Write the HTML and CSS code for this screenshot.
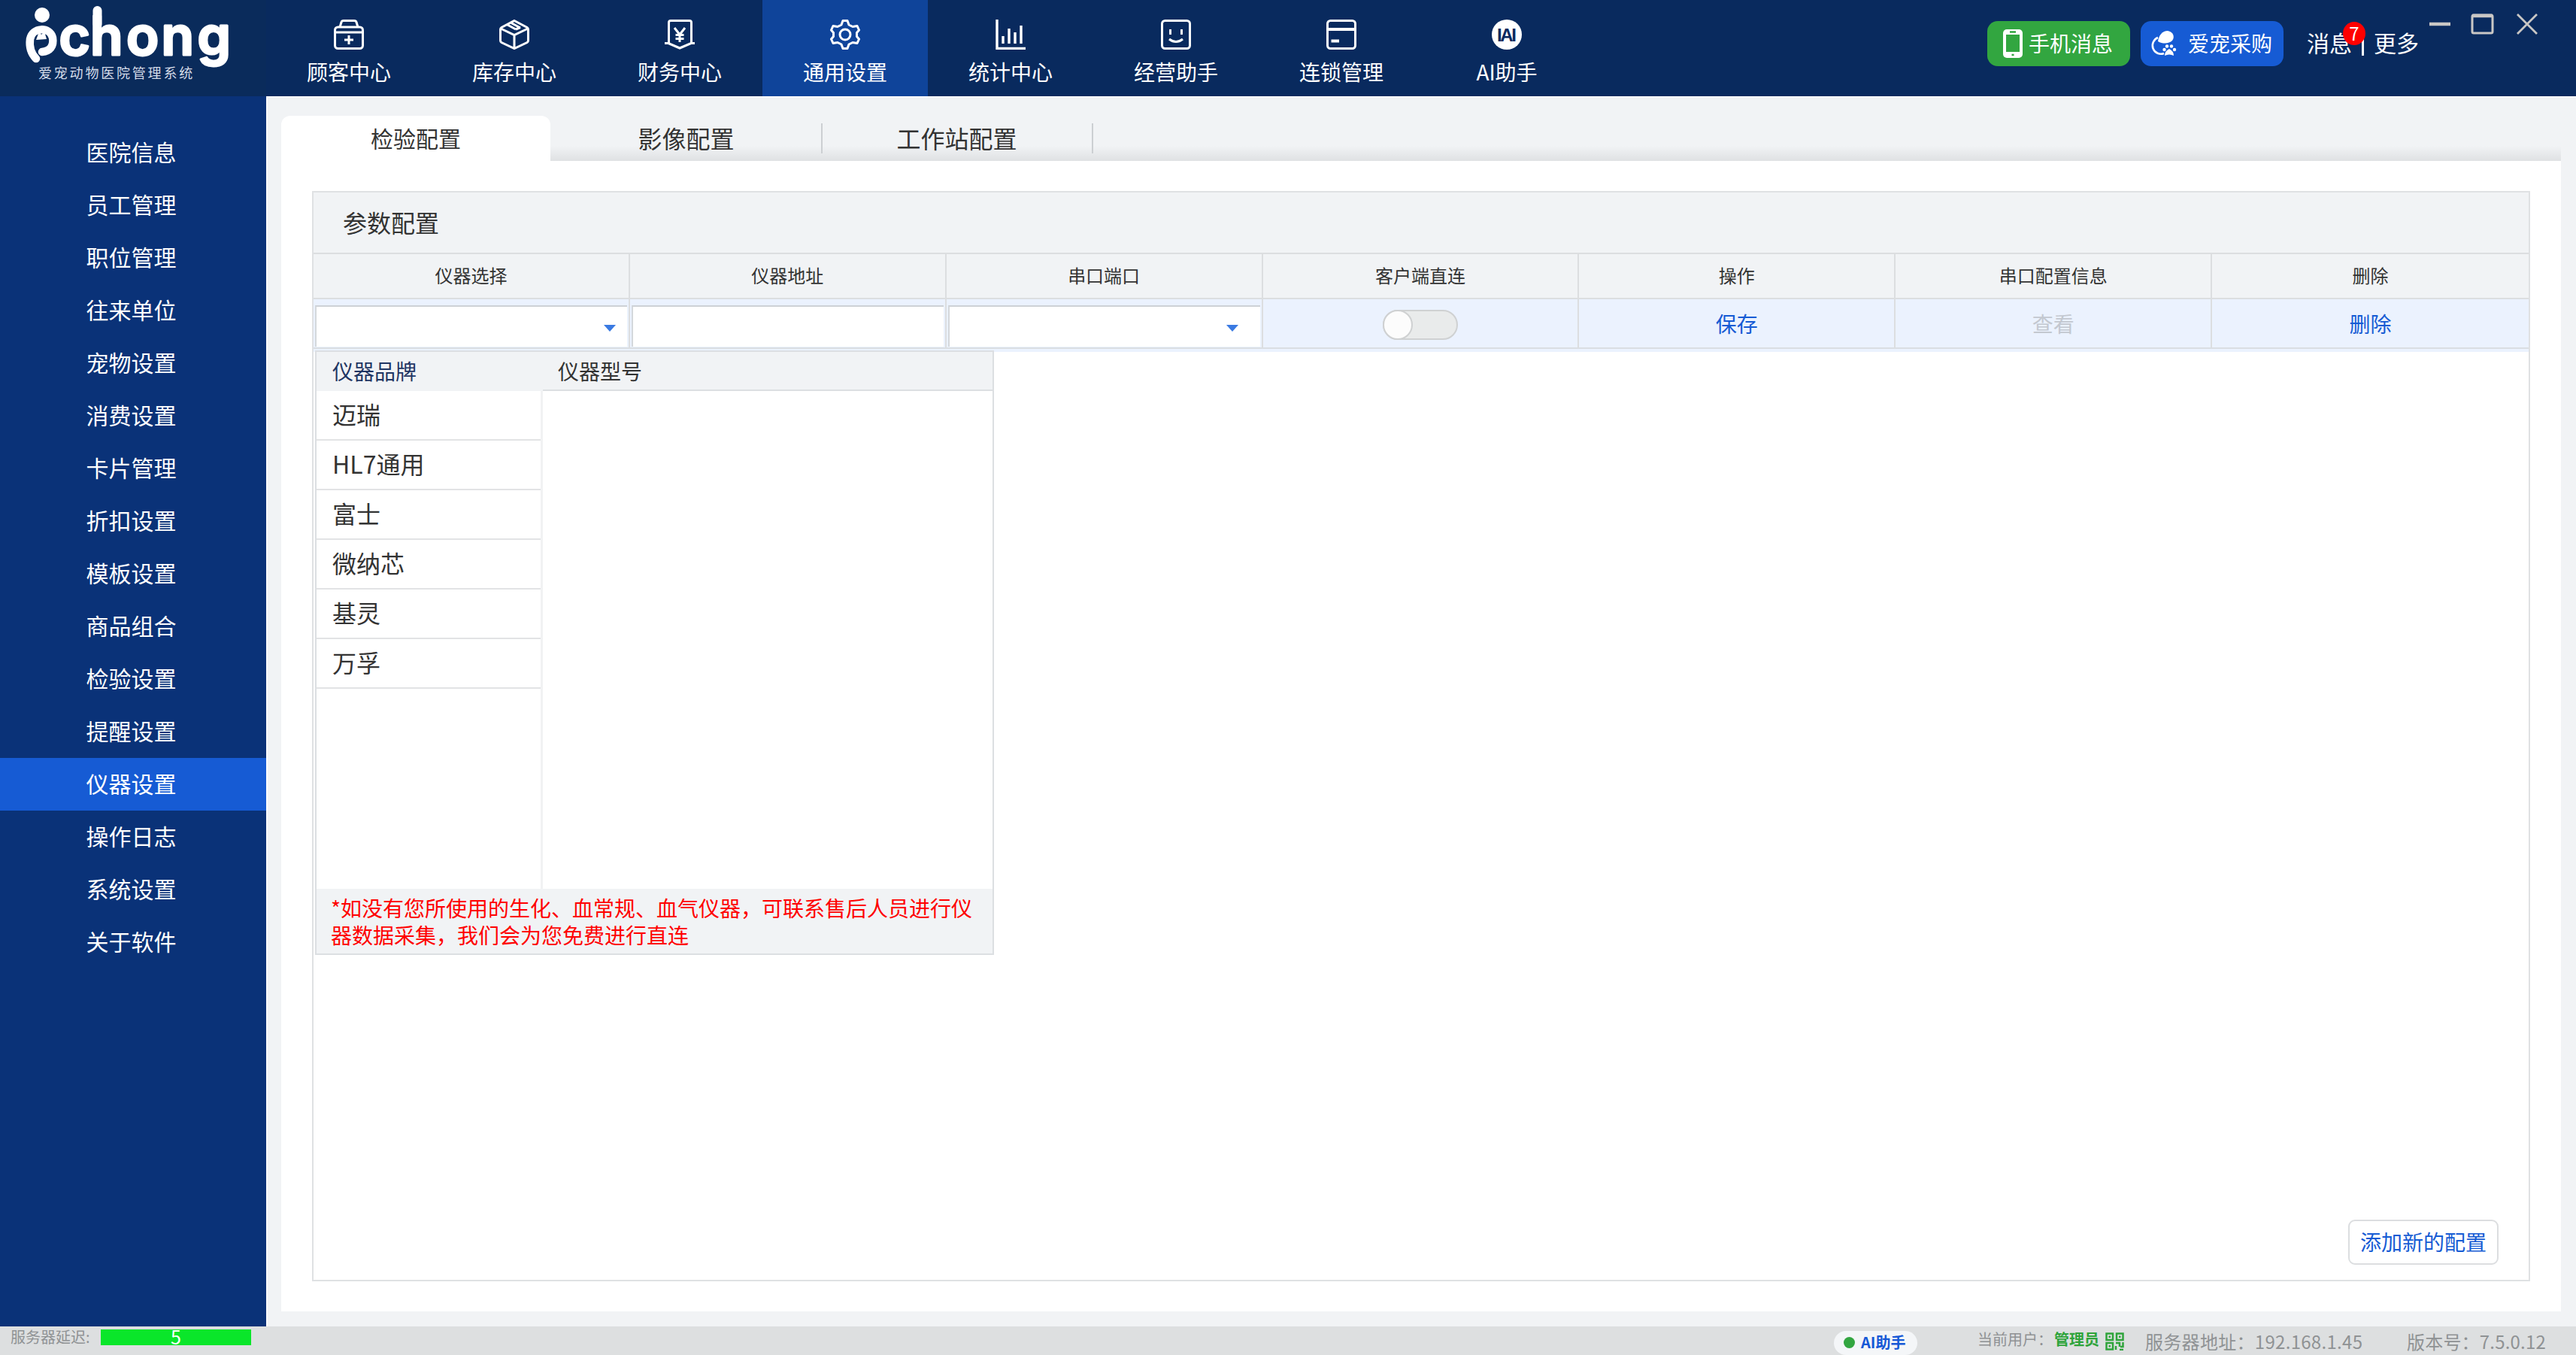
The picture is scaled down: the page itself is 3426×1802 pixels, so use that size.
FILE: index.html
```html
<!DOCTYPE html>
<html lang="zh-CN">
<head>
<meta charset="utf-8">
<title>爱宠动物医院管理系统</title>
<link rel="stylesheet" href="styles.css">
</head>
<body>
<div class="app">
  <header class="topbar">
    <div class="brand">
      <svg class="brand-logo" viewBox="0 0 354 128" width="354" height="128">
        <circle cx="56" cy="20" r="10" fill="#fff"/>
        <path d="M48 78C40 70 39 60 40 52C43 36 66 35 70 50C72 62 66 68 56 69" fill="none" stroke="#fff" stroke-width="10.500" stroke-linecap="round"/>
        <path d="M48 53L52 42L55 46L59 42L62 52Z" fill="#fff"/>
        <path d="M129.500 14V32" stroke="#fff" stroke-width="12" stroke-linecap="round"/>
        <text class="brand-word" x="78.500 120 168 214.500 262.500" y="73">chong</text>
        <text class="brand-sub" x="51" y="104">爱宠动物医院管理系统</text>
      </svg>
    </div>
    <nav class="nav">
      <a class="nav-item">
        <svg class="nav-icon" viewBox="0 0 40 40"><rect x="1.500" y="10" width="37" height="28.500" rx="4"/><path d="M1.500 17H38.500M8 10L10 3.500Q10.500 1.500 13 1.500H27Q29.500 1.500 30 3.500L32 10M20 21V33M14 27H26"/></svg>
        <span>顾客中心</span>
      </a>
      <a class="nav-item">
        <svg class="nav-icon" viewBox="0 0 40 40"><path d="M20 1.500L37 10.500Q38.500 11.500 38.500 13V28Q38.500 29.500 37 30.500L20 38.500L3 30.500Q1.500 29.500 1.500 28V13Q1.500 11.500 3 10.500ZM2 12L20 20.500L38 12M20 20.500V38M10 6.500L22 13M15 4L28 11M22 13L28 10.500"/></svg>
        <span>库存中心</span>
      </a>
      <a class="nav-item">
        <svg class="nav-icon" viewBox="0 0 40 40"><path d="M5.500 33V4Q5.500 1.500 8 1.500H33Q35.500 1.500 35.500 4V33M0 31.500H5L20 38L35 31.500H40M13 11L20 20L27 11M20 20V30M14.500 20.500H25.500M14.500 25.500H25.500"/></svg>
        <span>财务中心</span>
      </a>
      <a class="nav-item nav-item--active">
        <svg class="nav-icon" viewBox="0 0 40 40"><path d="M17 1.500H23L25 7L30 9.500L36 8.500L38.500 14L35.500 17.500V22.500L38.500 26L36 31.500L30 30.500L25 33L23 38.500H17L15 33L10 30.500L4 31.500L1.500 26L4.500 22.500V17.500L1.500 14L4 8.500L10 9.500L15 7Z" stroke-linejoin="round"/><circle cx="20" cy="20" r="7"/></svg>
        <span>通用设置</span>
      </a>
      <a class="nav-item">
        <svg class="nav-icon" viewBox="0 0 40 40"><path d="M2 0V38.500H40M10 32V22M18 32V12M26 32V17M34 32V8" stroke-width="3.400"/></svg>
        <span>统计中心</span>
      </a>
      <a class="nav-item">
        <svg class="nav-icon" viewBox="0 0 40 40"><rect x="1.500" y="1.500" width="37" height="37" rx="4"/><path d="M12.500 13V20M27.500 13V20M11 26Q20 33 29 26"/></svg>
        <span>经营助手</span>
      </a>
      <a class="nav-item">
        <svg class="nav-icon" viewBox="0 0 40 40"><rect x="1.500" y="1.500" width="37" height="37" rx="4"/><path d="M2 13H38M6.500 28.500H17" stroke-width="4"/></svg>
        <span>连锁管理</span>
      </a>
      <a class="nav-item">
        <svg class="nav-icon" viewBox="0 0 40 40"><circle class="nav-icon-disc" cx="20" cy="20" r="20"/><text class="nav-icon-text" x="20" y="29" text-anchor="middle" textLength="26">IAI</text></svg>
        <span>AI助手</span>
      </a>
    </nav>
    <div class="tools">
      <button class="tool-btn tool-btn--green">
        <svg width="26" height="38" viewBox="0 0 26 38"><rect width="26" height="38" rx="5" fill="#fff"/><path d="M4 7H22V30H4Z" fill="#32a640"/><path d="M9 3.500H17M11.500 34H14.500" stroke="#32a640" stroke-width="2.500"/></svg>
        <span>手机消息</span>
      </button>
      <button class="tool-btn tool-btn--blue">
        <svg width="36" height="34" viewBox="0 0 36 34"><path d="M10 9A11 11 0 1 0 18 30" fill="none" stroke="#fff" stroke-width="2.500"/><path d="M10 14C11 6 16 0 23 0C30 1 33 8 29 13C25 17 17 18 10 14Z" fill="#fff"/><path d="M19 33Q19 27 25 24Q31 27 31 33Q25 30 19 33Z" fill="#fff"/><circle cx="18.500" cy="25" r="2.200" fill="#fff"/><circle cx="22" cy="20.500" r="2.200" fill="#fff"/><circle cx="28" cy="20.500" r="2.200" fill="#fff"/><circle cx="32" cy="25" r="2.200" fill="#fff"/></svg>
        <span>爱宠采购</span>
      </button>
      <div class="links">
        <span class="msg">消息<b class="badge">7</b></span>
        <i class="links-sep"></i>
        <span>更多</span>
      </div>
      <svg class="win-controls" width="144" height="30" viewBox="0 0 144 30"><path d="M0 15H28" stroke-width="4.500"/><rect x="57" y="3" width="27" height="24" rx="2" stroke-width="3"/><path d="M57 4H84" stroke-width="4.500"/><path d="M117 2L143 28M143 2L117 28" stroke-width="2.800"/></svg>
    </div>
  </header>

  <div class="body">
    <aside class="sidebar">
      <a class="side-item">医院信息</a>
      <a class="side-item">员工管理</a>
      <a class="side-item">职位管理</a>
      <a class="side-item">往来单位</a>
      <a class="side-item">宠物设置</a>
      <a class="side-item">消费设置</a>
      <a class="side-item">卡片管理</a>
      <a class="side-item">折扣设置</a>
      <a class="side-item">模板设置</a>
      <a class="side-item">商品组合</a>
      <a class="side-item">检验设置</a>
      <a class="side-item">提醒设置</a>
      <a class="side-item side-item--active">仪器设置</a>
      <a class="side-item">操作日志</a>
      <a class="side-item">系统设置</a>
      <a class="side-item">关于软件</a>
    </aside>

    <main class="main">
      <div class="tabs">
        <div class="tab tab--active">检验配置</div>
        <div class="tab">影像配置</div>
        <div class="tab">工作站配置</div>
      </div>
      <section class="page">
        <div class="panel">
          <h2 class="panel-title">参数配置</h2>
          <div class="row row--head">
            <div class="cell">仪器选择</div>
            <div class="cell">仪器地址</div>
            <div class="cell">串口端口</div>
            <div class="cell">客户端直连</div>
            <div class="cell">操作</div>
            <div class="cell">串口配置信息</div>
            <div class="cell">删除</div>
          </div>
          <div class="row row--data">
            <div class="cell cell--field">
              <div class="field field--select"></div>
              <div class="dropdown">
                <div class="dropdown-cols">
                  <div class="brands">
                    <div class="col-title col-title--brand">仪器品牌</div>
                    <div class="brand-item">迈瑞</div>
                    <div class="brand-item">HL7通用</div>
                    <div class="brand-item">富士</div>
                    <div class="brand-item">微纳芯</div>
                    <div class="brand-item">基灵</div>
                    <div class="brand-item">万孚</div>
                  </div>
                  <div class="models">
                    <div class="col-title col-title--model">仪器型号</div>
                  </div>
                </div>
                <p class="dropdown-note">*如没有您所使用的生化、血常规、血气仪器，可联系售后人员进行仪<br>器数据采集，我们会为您免费进行直连</p>
              </div>
            </div>
            <div class="cell cell--field"><div class="field"></div></div>
            <div class="cell cell--field"><div class="field field--select field--port"></div></div>
            <div class="cell"><div class="toggle"><i class="toggle-knob"></i></div></div>
            <div class="cell cell--link">保存</div>
            <div class="cell cell--disabled">查看</div>
            <div class="cell cell--link">删除</div>
          </div>
          <div class="row-tail"></div>
          <div class="panel-foot"><button class="add-btn">添加新的配置</button></div>
        </div>
      </section>
    </main>
  </div>

  <footer class="status">
    <span class="latency-label">服务器延迟:</span>
    <span class="latency-bar">5</span>
    <span class="ai-pill"><i class="ai-dot"></i>AI助手</span>
    <span class="user-label">当前用户：</span>
    <b class="user-name">管理员</b>
    <svg class="qr" width="25" height="24" viewBox="0 0 25 24"><path d="M1.500 1.500H10V10H1.500ZM15 1.500H23.500V10H15ZM1.500 14H10V22.500H1.500ZM14 14H19V19M23.500 13V19H20M14 18V23M19 23H24M4.500 5.700H7M18 5.700H20.500M4.500 18.300H7" fill="none" stroke="#2fa43b" stroke-width="2.500"/></svg>
    <span class="server">服务器地址：192.168.1.45</span>
    <span class="version">版本号：7.5.0.12</span>
  </footer>
</div>
</body>
</html>
```
FILE: styles.css
```css
* { box-sizing: border-box; }

body {
  margin: 0;
  font-family: "Noto Sans CJK SC", sans-serif;
  color: #333;
  background: #f1f3f5;
}

button { font-family: inherit; }

.app {
  display: flex;
  flex-direction: column;
  width: 3426px;
  height: 1802px;
  overflow: hidden;
}

/* top bar */
.topbar {
  display: flex;
  height: 128px;
  flex: none;
  background: #092a5e;
  color: #fff;
}

.brand { width: 354px; height: 128px; background: #0a2b5b; }
.brand-logo { display: block; }
.brand-word {
  font: 600 71px Inter, sans-serif;
  fill: #fff;
  stroke: #fff;
  stroke-width: 3px;
  stroke-linejoin: round;
}
.brand-sub { font-size: 18px; letter-spacing: 2.800px; fill: #d5dce8; }

.nav { display: flex; }
.nav-item {
  display: flex;
  flex-direction: column;
  align-items: center;
  width: 220px;
  padding-top: 26px;
  font-size: 28px;
  line-height: 40px;
}
.nav-item span { margin-top: 9px; }
.nav-item--active { background: #0f449a; }
.nav-icon {
  width: 40px;
  height: 40px;
  fill: none;
  stroke: #fff;
  stroke-width: 3px;
}
.nav-icon-disc { fill: #fff; stroke: none; }
.nav-icon-text { font: 700 24px "Liberation Sans", sans-serif; fill: #092a5e; stroke: none; }

.tools {
  display: flex;
  align-items: flex-start;
  margin-left: auto;
  padding-right: 51px;
}
.tool-btn {
  display: flex;
  align-items: center;
  width: 190px;
  height: 60px;
  margin: 28px 14px 0 0;
  padding: 0;
  border: 0;
  border-radius: 14px;
  color: #fff;
  font-size: 28px;
  line-height: 56px;
}
.tool-btn span { padding-bottom: 3px; }
.tool-btn--green { background: #32a640; padding-left: 21px; gap: 8px; }
.tool-btn--blue { background: #165bd4; padding-left: 13px; gap: 14px; margin-right: 31px; }
.links { display: flex; margin-top: 28px; font-size: 30px; line-height: 56px; }
.msg { position: relative; }
.badge {
  position: absolute;
  left: 48px;
  top: 1px;
  width: 30px;
  height: 31px;
  border-radius: 50%;
  background: #f00;
  font-size: 24px;
  font-weight: 400;
  line-height: 29px;
  text-align: center;
}
.links-sep { width: 3px; height: 32px; margin: 14px 13px 0; background: #fff; }
.win-controls { margin: 17px 0 0 14px; fill: none; stroke: #c9c7c5; }

/* body */
.body { display: flex; flex: 1; min-height: 0; }
.sidebar {
  width: 354px;
  padding-top: 40px;
  background: #0a3278;
  color: #fff;
  font-size: 30px;
}
.side-item {
  display: block;
  height: 70px;
  padding-right: 5px;
  line-height: 67px;
  text-align: center;
}
.side-item--active { background: #165bd4; }

.main {
  display: flex;
  flex-direction: column;
  flex: 1;
  padding: 0 20px 20px 18px;
  border-top: 2px solid #fff;
  border-left: 2px solid #fff;
}
.tabs {
  display: flex;
  height: 84px;
  flex: none;
  padding-top: 24px;
  background: linear-gradient(to bottom, transparent 64px, #dfe1e3 84px);
}
.tab {
  position: relative;
  width: 360px;
  padding-right: 3px;
  font-size: 32px;
  line-height: 59px;
  text-align: center;
}
.tab::after {
  content: "";
  position: absolute;
  right: 0;
  top: 10px;
  width: 2px;
  height: 40px;
  background: #cccfd2;
}
.tab--active {
  width: 358px;
  margin-right: 2px;
  padding: 0;
  border-radius: 12px 12px 0 0;
  background: #fff;
  font-size: 30px;
}
.tab--active::after { display: none; }

.page { display: flex; flex: 1; padding: 40px 41px; background: #fff; }
.panel {
  display: flex;
  flex-direction: column;
  flex: 1;
  border: 2px solid #dfe1e3;
}
.panel-title {
  height: 82px;
  margin: 0;
  padding-left: 39px;
  border-bottom: 2px solid #dcdee0;
  background: #f1f3f5;
  font-size: 32px;
  font-weight: 400;
  line-height: 79px;
}
.row { display: grid; grid-template-columns: repeat(7, 1fr); }
.cell {
  display: flex;
  align-items: center;
  justify-content: center;
  padding-bottom: 4px;
  border-right: 2px solid #dcdee0;
}
.cell:last-child { border-right: 0; }
.row--head {
  height: 60px;
  border-bottom: 2px solid #dcdee0;
  background: #f1f3f5;
  font-size: 24px;
}
.row--data { height: 66px; border-bottom: 2px solid #dadee2; background: #ebf2fe; font-size: 28px; }
.row--data .cell { padding-bottom: 0; }
.row-tail { height: 4px; background: #ebf2fe; }
.row--data .cell--field { position: relative; align-items: flex-end; padding: 0 2px 1px; }
.cell--link { color: #165bd4; }
.cell--disabled { color: #c3c8d0; }

.field {
  width: 100%;
  height: 55px;
  border-top: 2px solid #cdd1d6;
  border-left: 2px solid #d4d8dc;
  background: #fff;
}
.field--select {
  display: flex;
  align-items: center;
  justify-content: flex-end;
  padding-right: 15px;
}
.field--port { padding-right: 29px; }
.field--select::after {
  content: "";
  margin-top: 4px;
  border: 8px solid transparent;
  border-top: 9px solid #3a7ae2;
  border-bottom: 0;
}

.toggle {
  width: 100px;
  height: 40px;
  margin-top: 3px;
  border: 2px solid #cfd1d2;
  border-radius: 20px;
  background: #e9ebeb;
}
.toggle-knob {
  display: block;
  width: 40px;
  height: 40px;
  margin: -2px;
  border: 2px solid #cfd1d2;
  border-radius: 50%;
  background: #fcfcfc;
}

/* instrument picker */
.dropdown {
  position: absolute;
  z-index: 2;
  left: 2px;
  top: 68px;
  display: flex;
  flex-direction: column;
  width: 903px;
  height: 804px;
  border: 2px solid #dcdfe2;
  background: #fff;
}
.dropdown-cols { display: flex; flex: 1; }
.brands { width: 301px; border-right: 3px solid #f1f2f3; }
.models { flex: 1; }
.col-title {
  height: 52px;
  background: #f1f3f5;
  font-size: 28px;
  line-height: 50px;
}
.col-title--brand { margin-right: -3px; padding-left: 21px; color: #1f3563; }
.col-title--model { padding-left: 20px; border-bottom: 2px solid #dcdfe2; }
.brand-item {
  height: 66px;
  padding-left: 21px;
  border-bottom: 2px solid #e2e3e5;
  font-size: 32px;
  line-height: 61px;
}
.dropdown-note {
  height: 86px;
  margin: 0;
  padding: 7px 0 0 19px;
  background: #f1f3f5;
  color: #f00;
  font-size: 28px;
  line-height: 36px;
  white-space: nowrap;
}

.panel-foot { display: flex; justify-content: flex-end; margin-top: auto; padding: 0 40px 20px 0; }
.add-btn {
  width: 200px;
  height: 60px;
  padding: 0 0 3px;
  border: 2px solid #dcdee0;
  border-radius: 9px;
  background: #fff;
  color: #165bd4;
  font-size: 28px;
}

/* status bar */
.status {
  display: flex;
  align-items: flex-start;
  height: 38px;
  flex: none;
  background: #dddfe0;
  color: #8f9294;
  font-size: 20px;
  line-height: 28px;
  white-space: nowrap;
}
.latency-label { width: 120px; padding-left: 14px; }
.latency-bar {
  width: 200px;
  height: 21px;
  margin: 4px 0 0 14px;
  background: #0ae62a;
  color: #fff;
  font-size: 25px;
  line-height: 19px;
  text-align: center;
}
.ai-pill {
  display: flex;
  align-items: center;
  width: 111px;
  height: 32px;
  margin: 6px 80px 0 auto;
  padding: 0 0 2px 13px;
  border-radius: 16px;
  background: #f4f6f8;
  color: #1658d6;
  font-weight: 700;
  gap: 8px;
}
.ai-dot { width: 15px; height: 15px; border-radius: 50%; background: #32a640; }
.user-label { width: 102px; margin-top: 3px; }
.user-name { width: 60px; margin-top: 3px; color: #2fa43b; }
.qr { margin: 8px 28px 0 8px; }
.server { width: 348px; margin-top: 6px; font-size: 24px; letter-spacing: 0.300px; }
.version { width: 225px; margin-top: 6px; font-size: 24px; letter-spacing: 0.200px; }
```
